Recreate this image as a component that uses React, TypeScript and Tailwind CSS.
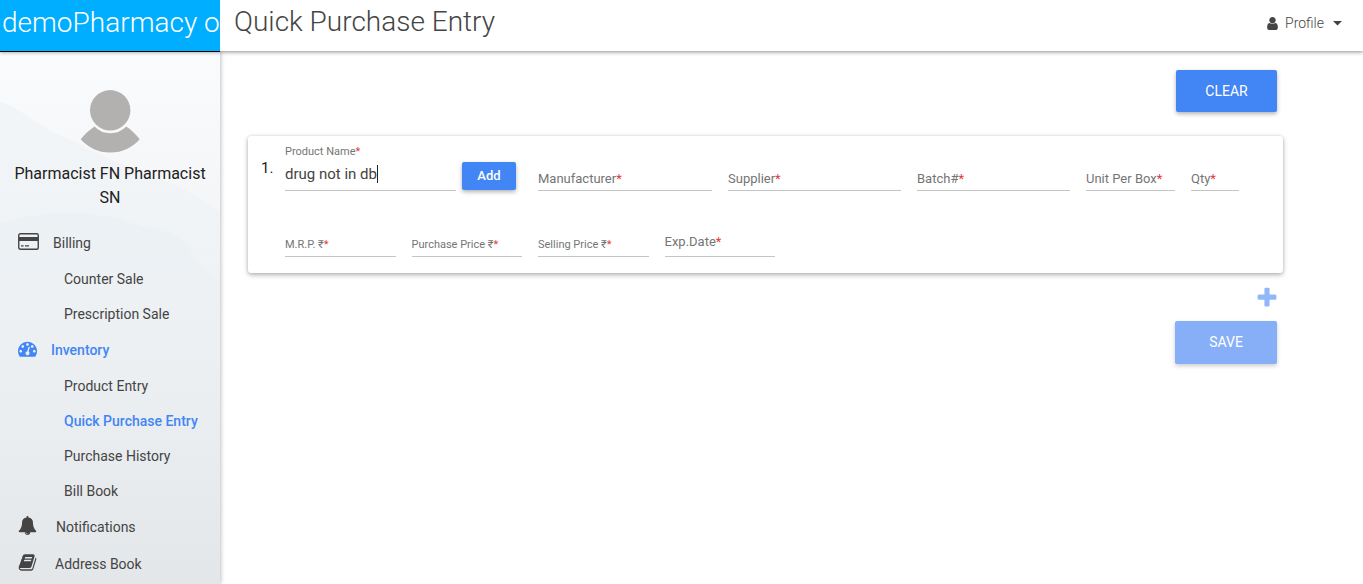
import React from "react";

const icons = {
  user: "M1536 1399q0 109-62.5 187t-150.5 78h-854q-88 0-150.5-78t-62.5-187q0-85 8.5-160.5t31.5-152 58.5-131 94-89 134.5-34.5q131 128 313 128t313-128q76 0 134.5 34.5t94 89 58.5 131 31.5 152 8.5 160.5zm-256-887q0 159-112.5 271.5t-271.5 112.5-271.5-112.5-112.5-271.5 112.5-271.5 271.5-112.5 271.5 112.5 112.5 271.5z",
  plus: "M1600 736v192q0 40-28 68t-68 28h-416v416q0 40-28 68t-68 28h-192q-40 0-68-28t-28-68v-416h-416q-40 0-68-28t-28-68v-192q0-40 28-68t68-28h416v-416q0-40 28-68t68-28h192q40 0 68 28t28 68v416h416q40 0 68 28t28 68z",
  bell: "M912 1696q0-16-16-16-59 0-101.5-42.5t-42.5-101.5q0-16-16-16t-16 16q0 73 51.5 124.5t124.5 51.5q16 0 16-16zm816-288q0 52-38 90t-90 38h-448q0 106-75 181t-181 75-181-75-75-181h-448q-52 0-90-38t-38-90q50-42 91-88t85-119.5 74.5-158.5 50-206 19.5-260q0-152 117-282.5t307-158.5q-8-19-8-39 0-40 28-68t68-28 68 28 28 68q0 20-8 39 190 28 307 158.5t117 282.5q0 139 19.5 260t50 206 74.5 158.5 85 119.5 91 88z",
  book: "M1703 478q40 57 18 129l-275 906q-19 64-76.5 107.5t-122.5 43.5h-923q-77 0-148.5-53.5t-99.5-131.5q-24-67-2-127 0-4 3-27t4-37q1-8-3-21.5t-3-19.5q2-11 8-21t16.5-23.5 16.5-23.5q23-38 45-91.5t30-91.5q3-10 .5-30t-.5-28q3-11 17-28t17-23q21-36 42-92t25-90q1-9-2.500-32t.5-28q4-13 22-30.500t22-22.500q19-26 42.500-84.500t27.500-96.500q1-8-3-25.500t-2-26.500q2-8 9-18t18-23 17-21q8-12 16.500-30.500t15-35 16-36 19.500-32 26.500-23.500 36-11.500 47.500 5.500l-1 3q38-9 51-9h761q74 0 114 56t18 130l-274 906q-36 119-71.500 153.500t-128.500 34.500h-869q-27 0-38 15-11 16-1 43 24 70 144 70h923q29 0 56-15.500t35-41.500l300-987q7-22 5-57 38 15 59 43zm-1064 2q-4 13 2 22.500t20 9.500h608q13 0 25.500-9.500t16.500-22.500l21-64q4-13-2-22.500t-20-9.500h-608q-13 0-25.500 9.500t-16.500 22.500zm-83 256q-4 13 2 22.500t20 9.500h608q13 0 25.500-9.500t16.500-22.500l21-64q4-13-2-22.500t-20-9.500h-608q-13 0-25.500 9.500t-16.500 22.500z",
  gauge: "M384 1152q0-53-37.5-90.5t-90.5-37.5-90.5 37.5-37.5 90.5 37.5 90.5 90.5 37.5 90.5-37.5 37.5-90.5zm192-448q0-53-37.5-90.5t-90.5-37.5-90.5 37.5-37.5 90.5 37.5 90.5 90.5 37.5 90.5-37.5 37.5-90.5zm428 481l101-382q6-26-7.5-48.5t-38.5-29.5-48 6.5-30 39.5l-101 382q-60 5-107 43.5t-63 98.5q-20 77 20 146t117 89 146-20 89-117q16-60-6-117t-72-91zm660-33q0-53-37.5-90.5t-90.5-37.5-90.5 37.5-37.5 90.5 37.5 90.5 90.5 37.5 90.5-37.5 37.5-90.5zm-640-640q0-53-37.5-90.5t-90.5-37.5-90.5 37.5-37.5 90.5 37.5 90.5 90.5 37.5 90.5-37.5 37.5-90.5zm448 192q0-53-37.5-90.5t-90.5-37.5-90.5 37.5-37.5 90.5 37.5 90.5 90.5 37.5 90.5-37.5 37.5-90.5zm320 448q0 261-141 483-19 29-54 29h-1402q-35 0-54-29-141-221-141-483 0-182 71-348t191-286 286-191 348-71 348 71 286 191 191 286 71 348z",
};

function Icon({ name, className }: { name: keyof typeof icons; className: string }) {
  return (
    <svg viewBox="0 0 1792 1792" className={`shrink-0 ${className}`} fill="currentColor" aria-hidden="true">
      <path d={icons[name]} />
    </svg>
  );
}

function CardIcon() {
  return (
    <svg viewBox="0 0 21 17" className="h-[17px] w-[21px] shrink-0" fill="none" aria-hidden="true">
      <rect x="0.75" y="0.75" width="19.5" height="15.5" rx="1.5" stroke="currentColor" strokeWidth="1.4" />
      <path d="M1 4h19v4H1z" fill="currentColor" />
      <path d="M3 12.8h2.6M7 12.8h4" stroke="currentColor" strokeWidth="1.3" />
    </svg>
  );
}

function Section({ icon, label, gap, active }: { icon: React.ReactNode; label: string; gap: string; active?: boolean }) {
  return (
    <a
      href="#"
      className={`flex h-[37px] items-center pl-[18px] ${gap} ${active ? "font-medium text-[#4285f4]" : "text-[#444]"}`}
    >
      {icon}
      <span className="pt-[2px]">{label}</span>
    </a>
  );
}

function SubItem({ label, active }: { label: string; active?: boolean }) {
  return (
    <a
      href="#"
      className={`flex h-[35px] items-center pt-[2px] pl-16 ${active ? "font-medium text-[#4285f4]" : "text-[#444]"}`}
    >
      {label}
    </a>
  );
}

function Sidebar() {
  return (
    <aside className="relative z-10 w-[220px] shrink-0 bg-linear-to-b from-[#fafbfc] via-[#eff2f4] to-[#e4e7e9] shadow-[0_0_5px_rgba(0,0,0,0.35)]">
      <svg
        viewBox="0 0 220 532"
        preserveAspectRatio="none"
        className="absolute inset-0 size-full"
        aria-hidden="true"
      >
        <defs>
          <linearGradient id="ridge" x1="0" y1="0" x2="0" y2="1">
            <stop offset="0" stopColor="#e3ebf1" stopOpacity="0.3" />
            <stop offset="1" stopColor="#e3ebf1" stopOpacity="0" />
          </linearGradient>
        </defs>
        <path d="M0 51C20 56 36 74 60 84S100 106 150 124S200 150 220 160V300H0z" fill="url(#ridge)" />
        <path d="M0 172C50 156 100 162 125 169C150 180 175 176 188 195S205 220 220 228V380H0z" fill="url(#ridge)" />
      </svg>
      <div className="relative flex flex-col">
        <svg viewBox="0 0 62 64" className="mx-auto mt-[38px] h-16 w-[62px]" fill="#b2b1af" aria-hidden="true">
          <circle cx="31.2" cy="21.3" r="20.2" />
          <path d="M1.7 50.2C5.5 45.5 10 41.5 15.500 37.500Q22 44.300 31.300 44.300T47.300 37.500C52.500 41 57 45.500 60.700 50.200C53.500 58.500 43.500 63.500 31.300 63.500S9 58.500 1.700 50.200z" />
        </svg>
        <p className="px-2 pt-[9px] text-center text-base leading-6 text-[#212121]">Pharmacist FN Pharmacist SN</p>
        <nav className="mt-[13px] text-sm" aria-label="Main">
          <Section icon={<CardIcon />} label="Billing" gap="gap-[14px]" />
          <SubItem label="Counter Sale" />
          <SubItem label="Prescription Sale" />
          <Section icon={<Icon name="gauge" className="size-[19px]" />} label="Inventory" gap="gap-[14px]" active />
          <SubItem label="Product Entry" />
          <SubItem label="Quick Purchase Entry" active />
          <SubItem label="Purchase History" />
          <SubItem label="Bill Book" />
          <Section icon={<Icon name="bell" className="size-[19px]" />} label="Notifications" gap="gap-[19px]" />
          <Section icon={<Icon name="book" className="size-[19px]" />} label="Address Book" gap="gap-[18px]" />
        </nav>
      </div>
    </aside>
  );
}

function Field({ id, label, size = "text-[13px]", lift = "pb-[3px]" }: { id: string; label: string; size?: string; lift?: string }) {
  return (
    <div className="grid h-[31px] border-b border-[#c4c4c4]">
      <label
        htmlFor={id}
        className={`col-start-1 row-start-1 self-end whitespace-nowrap leading-4 text-[#757575] ${size} ${lift}`}
      >
        {label}
        <span className="text-[#e53935]">*</span>
      </label>
      <input id={id} className="col-start-1 row-start-1 min-w-0 bg-transparent text-[15px] outline-none" />
    </div>
  );
}

function EntryCard() {
  return (
    <section className="flex rounded-[3px] bg-white pt-2 pr-11 pb-4 pl-[13px] shadow-[0_2px_5px_rgba(0,0,0,0.28),0_0_3px_rgba(0,0,0,0.12)]">
      <span className="w-6 shrink-0 pt-[14px] text-[15px] leading-5 text-[#212121]">1.</span>
      <div className="min-w-0 grow">
        <div className="grid grid-cols-[237fr_174fr_173fr_153fr_89fr_48fr] items-end gap-x-4">
          <div className="flex items-end gap-[6px] pr-[6px]">
            <div className="min-w-0 grow border-b border-[#c4c4c4]">
              <label htmlFor="product" className="block pt-px text-[11px] leading-[14px] text-[#757575]">
                Product Name<span className="text-[#e53935]">*</span>
              </label>
              <div className="flex h-[31px] items-center pb-[2px]">
                <input
                  id="product"
                  defaultValue="drug not in db"
                  className="max-w-full bg-transparent text-[15px] leading-5 text-[#444] caret-transparent outline-none [field-sizing:content]"
                />
                <span className="h-[18px] w-px bg-[#222]" />
              </div>
            </div>
            <button className="mb-px h-7 w-[54px] shrink-0 rounded-[2px] bg-[#4285f4] text-[13px] font-medium text-white shadow-[0_2px_4px_rgba(0,0,0,0.3)]">
              Add
            </button>
          </div>
          <Field id="manufacturer" label="Manufacturer" />
          <Field id="supplier" label="Supplier" />
          <Field id="batch" label="Batch#" />
          <Field id="unit" label="Unit Per Box" />
          <Field id="qty" label="Qty" />
        </div>
        <div className="mt-[35px] grid grid-cols-[221fr_221fr_221fr_221fr_896fr] gap-x-4">
          <Field id="mrp" label="M.R.P. ₹" size="text-[11px]" />
          <Field id="purchase" label="Purchase Price ₹" size="text-[11px]" />
          <Field id="selling" label="Selling Price ₹" size="text-[11px]" />
          <Field id="expiry" label="Exp.Date" lift="pb-[6px]" />
        </div>
      </div>
    </section>
  );
}

export default function App() {
  return (
    <div className="flex h-screen flex-col overflow-hidden bg-white font-[Roboto,'Noto_Sans',sans-serif] text-[#444]">
      <header className="relative z-20 flex h-[51px] shrink-0 items-stretch bg-white shadow-[0_1px_4px_rgba(0,0,0,0.45)]">
        <div className="h-[52px] w-[220px] shrink-0 overflow-hidden border-b border-black bg-[#00aeff] pl-[2px] text-[28px] leading-[46px] font-light whitespace-nowrap text-white">
          demoPharmacy o
        </div>
        <h1 className="grow pl-[14px] text-[28px] leading-[44px] font-light whitespace-nowrap">Quick Purchase Entry</h1>
        <button className="mb-[5px] flex items-center pr-[21px] text-sm font-light">
          <Icon name="user" className="mr-[5px] size-[15px]" />
          Profile
          <svg viewBox="0 0 9 5" className="ml-[9px] h-[5px] w-[9px]" fill="currentColor" aria-hidden="true">
            <path d="M0 0h9L4.500 4.500z" />
          </svg>
        </button>
      </header>
      <div className="flex min-h-0 grow">
        <Sidebar />
        <main className="flex min-w-0 grow flex-col pt-[19px] pr-20 pl-7">
          <button className="mr-[6px] mb-6 h-[42px] w-[101px] self-end rounded-[2px] bg-[#4285f4] text-sm text-white shadow-[0_2px_4px_rgba(0,0,0,0.3)]">
            CLEAR
          </button>
          <EntryCard />
          <button aria-label="Add row" className="mt-[13px] mr-1 self-end text-[#91b7f9]">
            <Icon name="plus" className="block size-6" />
          </button>
          <button
            disabled
            className="mt-[11px] mr-[6px] h-[43px] w-[102px] self-end rounded-[2px] bg-[#86aff8] pb-[2px] text-sm text-white shadow-[0_2px_4px_rgba(0,0,0,0.2)]"
          >
            SAVE
          </button>
        </main>
      </div>
    </div>
  );
}
